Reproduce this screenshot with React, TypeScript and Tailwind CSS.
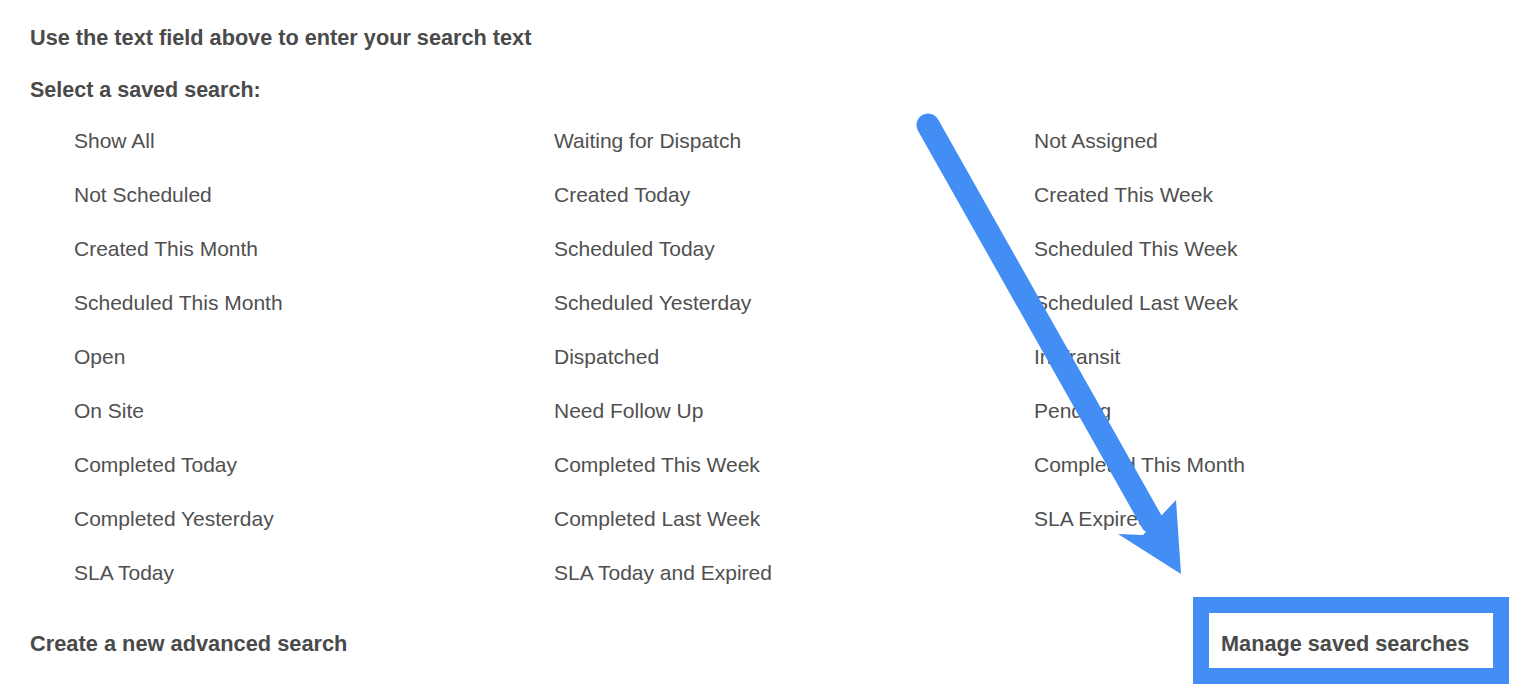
import React from "react";

// saved searches, laid out row by row across three columns
const savedSearches = [
  "Show All",
  "Waiting for Dispatch",
  "Not Assigned",
  "Not Scheduled",
  "Created Today",
  "Created This Week",
  "Created This Month",
  "Scheduled Today",
  "Scheduled This Week",
  "Scheduled This Month",
  "Scheduled Yesterday",
  "Scheduled Last Week",
  "Open",
  "Dispatched",
  "In Transit",
  "On Site",
  "Need Follow Up",
  "Pending",
  "Completed Today",
  "Completed This Week",
  "Completed This Month",
  "Completed Yesterday",
  "Completed Last Week",
  "SLA Expired",
  "SLA Today",
  "SLA Today and Expired",
];

export default function App() {
  return (
    <div
      className="relative w-[1536px] h-[688px] overflow-hidden bg-white text-[#4a4a4a]"
      style={{ fontFamily: '"Liberation Sans", Arial, sans-serif' }}
    >
      <div className="px-[30px] pt-[12px]">
        <h2 className="h-[52px] leading-[52px] text-[21.7px] font-bold">
          Use the text field above to enter your search text
        </h2>
        <h2 className="h-[50px] leading-[52px] text-[21.5px] font-bold">
          Select a saved search:
        </h2>

        <ul className="ml-[44px] grid grid-cols-[480px_480px_1fr]">
          {savedSearches.map((name) => (
            <li
              key={name}
              className="h-[54px] leading-[54px] text-[21px] text-[#505050] cursor-pointer"
            >
              {name}
            </li>
          ))}
        </ul>

        <div className="flex items-start justify-between">
          <a className="mt-[32px] leading-[24px] text-[21.8px] font-bold cursor-pointer">
            Create a new advanced search
          </a>
          <div className="-mt-[3px] -mr-[3px] border-[16px] border-[#438ef5] bg-white">
            <a className="block w-[284px] pl-[12px] pt-[19px] pb-[12px] leading-[24px] text-[21.7px] font-bold cursor-pointer">
              Manage saved searches
            </a>
          </div>
        </div>
      </div>

      {/* annotation arrow */}
      <svg
        className="absolute inset-0 pointer-events-none"
        width="1536"
        height="688"
        viewBox="0 0 1536 688"
      >
        <line
          x1="928"
          y1="125"
          x2="1152"
          y2="522"
          stroke="#438ef5"
          strokeWidth="23"
          strokeLinecap="round"
        />
        <polygon points="1176,500 1181,574 1118,534 1143,535" fill="#438ef5" />
      </svg>
    </div>
  );
}
